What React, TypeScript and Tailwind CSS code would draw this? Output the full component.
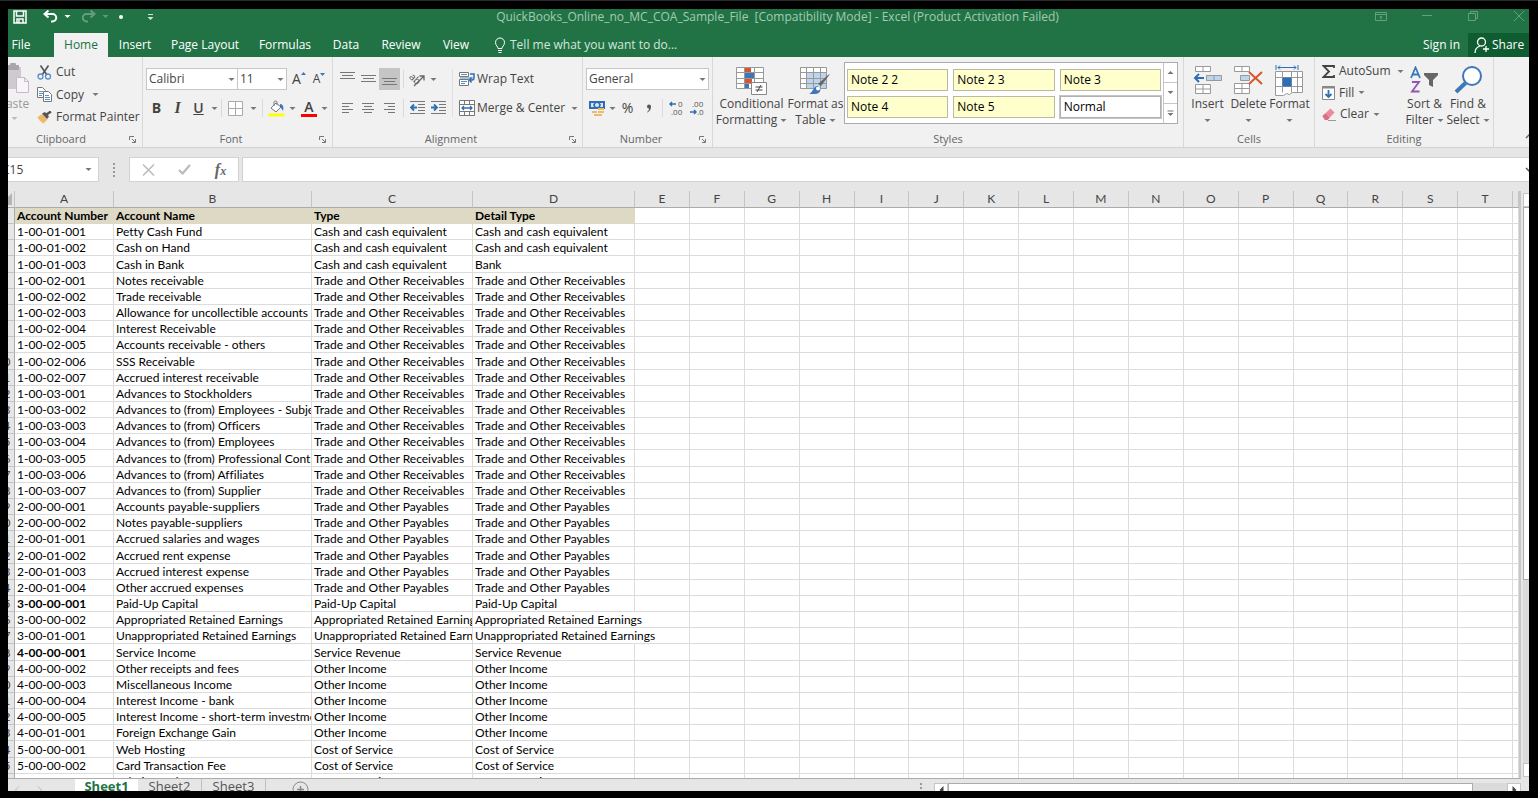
import type { ReactNode } from "react";

type Row = [string, string, string, string];

const RECEIVABLES = "Trade and Other Receivables";
const PAYABLES = "Trade and Other Payables";
const CASH = "Cash and cash equivalent";

const rows: Row[] = [
  ["1-00-01-001", "Petty Cash Fund", CASH, CASH],
  ["1-00-01-002", "Cash on Hand", CASH, CASH],
  ["1-00-01-003", "Cash in Bank", CASH, "Bank"],
  ["1-00-02-001", "Notes receivable", RECEIVABLES, RECEIVABLES],
  ["1-00-02-002", "Trade receivable", RECEIVABLES, RECEIVABLES],
  ["1-00-02-003", "Allowance for uncollectible accounts", RECEIVABLES, RECEIVABLES],
  ["1-00-02-004", "Interest Receivable", RECEIVABLES, RECEIVABLES],
  ["1-00-02-005", "Accounts receivable - others", RECEIVABLES, RECEIVABLES],
  ["1-00-02-006", "SSS Receivable", RECEIVABLES, RECEIVABLES],
  ["1-00-02-007", "Accrued interest receivable", RECEIVABLES, RECEIVABLES],
  ["1-00-03-001", "Advances to Stockholders", RECEIVABLES, RECEIVABLES],
  ["1-00-03-002", "Advances to (from) Employees - Subject", RECEIVABLES, RECEIVABLES],
  ["1-00-03-003", "Advances to (from) Officers", RECEIVABLES, RECEIVABLES],
  ["1-00-03-004", "Advances to (from) Employees", RECEIVABLES, RECEIVABLES],
  ["1-00-03-005", "Advances to (from) Professional Cont", RECEIVABLES, RECEIVABLES],
  ["1-00-03-006", "Advances to (from) Affiliates", RECEIVABLES, RECEIVABLES],
  ["1-00-03-007", "Advances to (from) Supplier", RECEIVABLES, RECEIVABLES],
  ["2-00-00-001", "Accounts payable-suppliers", PAYABLES, PAYABLES],
  ["2-00-00-002", "Notes payable-suppliers", PAYABLES, PAYABLES],
  ["2-00-01-001", "Accrued salaries and wages", PAYABLES, PAYABLES],
  ["2-00-01-002", "Accrued rent expense", PAYABLES, PAYABLES],
  ["2-00-01-003", "Accrued interest expense", PAYABLES, PAYABLES],
  ["2-00-01-004", "Other accrued expenses", PAYABLES, PAYABLES],
  ["3-00-00-001", "Paid-Up Capital", "Paid-Up Capital", "Paid-Up Capital"],
  ["3-00-00-002", "Appropriated Retained Earnings", "Appropriated Retained Earnings", "Appropriated Retained Earnings"],
  ["3-00-01-001", "Unappropriated Retained Earnings", "Unappropriated Retained Earnings", "Unappropriated Retained Earnings"],
  ["4-00-00-001", "Service Income", "Service Revenue", "Service Revenue"],
  ["4-00-00-002", "Other receipts and fees", "Other Income", "Other Income"],
  ["4-00-00-003", "Miscellaneous Income", "Other Income", "Other Income"],
  ["4-00-00-004", "Interest Income - bank", "Other Income", "Other Income"],
  ["4-00-00-005", "Interest Income - short-term investme", "Other Income", "Other Income"],
  ["4-00-01-001", "Foreign Exchange Gain", "Other Income", "Other Income"],
  ["5-00-00-001", "Web Hosting", "Cost of Service", "Cost of Service"],
  ["5-00-00-002", "Card Transaction Fee", "Cost of Service", "Cost of Service"],
  ["5-00-00-003", "Salaries and Wages-Ex-Tax", "Cost of Service", "Cost of Service"],
];

const boldAccounts = ["3-00-00-001", "4-00-00-001"];
const emptyColumns = "EFGHIJKLMNOPQRST".split("");

const tabs = [
  { label: "Insert", width: "w-[54px]" },
  { label: "Page Layout", width: "w-[86px]" },
  { label: "Formulas", width: "w-[74px]" },
  { label: "Data", width: "w-[48px]" },
  { label: "Review", width: "w-[62px]" },
  { label: "View", width: "w-[48px]" },
];

const cellStyles = ["Note 2 2", "Note 2 3", "Note 3", "Note 4", "Note 5", "Normal"];

export default function App() {
  return (
    <div className="flex h-screen overflow-hidden border-t border-[#2a2a2a] bg-black pt-2 pr-[9px] pb-[7px] pl-2 font-['Open_Sans',sans-serif] text-xs text-[#444]">
      <div className="flex min-w-0 flex-1 overflow-hidden">
        {/* the window runs past the frame on every side */}
        <div className="-mt-[9px] -mr-[13px] -mb-[5px] -ml-[15px] flex min-w-0 flex-1 flex-col bg-[#e6e6e6]">
          <TitleBar />
          <TabBar />
          <Ribbon />
          <FormulaBar />
          <div className="flex min-h-0 flex-1">
            <Sheet />
            <VerticalScroll />
          </div>
          <SheetTabs />
        </div>
      </div>
    </div>
  );
}

function TitleBar() {
  return (
    <header className="flex h-[33px] shrink-0 items-center bg-[#217346] text-white">
      <div className="flex flex-1 items-center pl-5">
        <button aria-label="Save">
          <svg width="14" height="14" viewBox="0 0 14 14" fill="none" stroke="white" strokeWidth="1.5">
            <path d="M1 1h12v12H1zM3.5 1v5h7V1M4 13V9h6v4M6 10v3" />
          </svg>
        </button>
        <button aria-label="Undo" className="ml-4">
          <svg width="15" height="14" viewBox="0 0 15 14" fill="none" stroke="white" strokeWidth="2">
            <path d="M5.5 0.5L1.5 4l4 3.500M2 4h7.500a3.500 3.500 0 0 1 0 7.500H8" />
          </svg>
        </button>
        <Caret className="ml-1.5 text-white" />
        <button aria-label="Redo" className="ml-2.5 opacity-30">
          <svg width="15" height="14" viewBox="0 0 15 14" fill="none" stroke="white" strokeWidth="2">
            <path d="M9.500 0.500l4 3.500-4 3.500M13 4H5.500a3.500 3.500 0 0 0 0 7.500H7" />
          </svg>
        </button>
        <Caret className="ml-1.5 text-[#5f9c7b]" />
        <span className="ml-2.5 size-1 rounded-full bg-white" />
        <button aria-label="Customize Quick Access Toolbar" className="ml-6">
          <svg width="7" height="8" viewBox="0 0 7 8" fill="#cfe3d7">
            <path d="M1 1h5v1H1zM0.500 4h6L3.500 7z" />
          </svg>
        </button>
      </div>
      <h1 className="whitespace-pre text-[#a3cbb3]">
        {"QuickBooks_Online_no_MC_COA_Sample_File  [Compatibility Mode] - Excel (Product Activation Failed)"}
      </h1>
      <div className="flex flex-1 justify-end">
        <WindowButton label="Ribbon Display Options">
          <path d="M0.500 1.500h11v8h-11zM0.500 3.500h11M6 8.500V5M4.500 6.500L6 5l1.500 1.500" />
        </WindowButton>
        <WindowButton label="Minimize">
          <path d="M1 4.500h10" />
        </WindowButton>
        <WindowButton label="Restore Down">
          <path d="M1.500 2.500h7v7h-7zM3.500 2.500v-2h7v7h-2" />
        </WindowButton>
        <WindowButton label="Close">
          <path d="M1 0l10 10M11 0L1 10" />
        </WindowButton>
      </div>
    </header>
  );
}

function WindowButton({ label, children }: { label: string; children: ReactNode }) {
  return (
    <button aria-label={label} className="flex w-[46px] justify-center">
      <svg width="12" height="12" viewBox="0 0 12 12" fill="none" stroke="#66a07e">
        {children}
      </svg>
    </button>
  );
}

function TabBar() {
  return (
    <nav className="flex h-6 shrink-0 items-stretch bg-[#217346] text-white">
      <button className="mr-[5px] w-[56px]">File</button>
      <button className="w-[54px] bg-[#f1f1f1] text-[#217346]">Home</button>
      {tabs.map((t) => (
        <button key={t.label} className={`${t.width} whitespace-nowrap`}>
          {t.label}
        </button>
      ))}
      <button className="ml-3.5 flex items-center gap-1 whitespace-nowrap text-[#d3e6db]">
        <svg width="12" height="16" viewBox="0 0 12 16" fill="none" stroke="white">
          <path d="M4 11.500c0-2-2.500-3-2.500-6a4.500 4.500 0 0 1 9 0c0 3-2.500 4-2.500 6zM4 13.500h4M4.500 15.500h3" />
        </svg>
        Tell me what you want to do...
      </button>
      <button className="ml-auto px-2 whitespace-nowrap">Sign in</button>
      <button className="flex w-[74px] items-center gap-0.5 bg-[#0e5c2f] pl-1.5">
        <svg width="16" height="17" viewBox="0 0 16 17" fill="none" stroke="white" strokeWidth="1.300">
          <circle cx="7.500" cy="5" r="4" />
          <path d="M1 16c0-4 2-6 5-7M12 9v6M9 12h6" />
        </svg>
        Share
      </button>
    </nav>
  );
}

function Caret({ className = "" }: { className?: string }) {
  return (
    <svg width="7" height="5" viewBox="0 0 7 5" className={`shrink-0 ${className}`} fill="currentColor" aria-hidden="true">
      <path d="M0.500 1h6L3.500 4z" />
    </svg>
  );
}

function Group({ label, launcher, className, children }: { label: string; launcher?: boolean; className: string; children: ReactNode }) {
  return (
    <section aria-label={label} className={`flex flex-col ${className}`}>
      <div className="flex h-[74px] border-r border-[#d8d8d8]">{children}</div>
      <div className="flex h-4 items-center border-r border-[#d8d8d8] text-[11px] text-[#666]">
        <span className="flex-1 text-center">{label}</span>
        {launcher && (
          <button aria-label={`${label} settings`} className="w-[13px]">
            <svg width="7" height="7" viewBox="0 0 7 7" fill="none" stroke="#777">
              <path d="M0.500 4V0.500H5M3 3l3 3M6.500 3v3.500H3" />
            </svg>
          </button>
        )}
      </div>
    </section>
  );
}

function IconButton({ label, width = "w-[21px]", active, children }: { label: string; width?: string; active?: boolean; children: ReactNode }) {
  return (
    <button aria-label={label} className={`flex h-[22px] shrink-0 items-center justify-center ${width} ${active ? "bg-[#c5c5c5]" : ""}`}>
      {children}
    </button>
  );
}

function Lines({ d }: { d: string }) {
  return (
    <svg width="15" height="14" viewBox="0 0 15 14" fill="none" stroke="#777">
      <path d={d} />
    </svg>
  );
}

function Divider() {
  return <span className="mx-[3px] h-[18px] w-px shrink-0 bg-[#dadada]" />;
}

function BigButton({ icon, lines, className }: { icon: ReactNode; lines: string[]; className: string }) {
  return (
    <button className={`flex shrink-0 flex-col items-center pt-[7px] leading-4 whitespace-nowrap ${className}`}>
      <span className="flex h-8 items-center">{icon}</span>
      <span>{lines[0]}</span>
      <span className="flex h-4 items-center gap-[3px]">
        {lines[1]}
        <Caret className="text-[#777]" />
      </span>
    </button>
  );
}

function Ribbon() {
  return (
    <div className="flex h-[91px] shrink-0 border-b border-[#d2d2d2] bg-[#f1f1f1]">
      <Group label="Clipboard" launcher className="w-[150px]">
        <button className="flex w-[42px] flex-col items-center pt-1.5 leading-4 text-[#999]">
          <svg width="26" height="33" viewBox="0 0 26 33" className="ml-1">
            <path d="M0 4h18v22H0z" fill="#cfcacf" />
            <path d="M3 2h4a3 3 0 0 1 6 0h3v5H3z" fill="#aaa5aa" />
            <path d="M13.500 14.500h8l4 4v11h-12z" fill="#f8f4fa" stroke="#c3bcc6" />
            <path d="M21.500 14.500v4h4" fill="none" stroke="#c3bcc6" />
          </svg>
          Paste
          <Caret className="mt-1 text-[#bbb]" />
        </button>
        <div className="flex flex-col pt-1 pl-0.5">
          <button className="flex h-[22px] items-center gap-1">
            <svg width="15" height="15" viewBox="0 0 15 15" fill="none">
              <path d="M3.500 0.500L10 10M11.500 0.500L5 10" stroke="#555" strokeWidth="1.600" />
              <circle cx="3.500" cy="11.500" r="2.500" stroke="#5b8fc7" strokeWidth="1.300" />
              <circle cx="11" cy="11.500" r="2.500" stroke="#5b8fc7" strokeWidth="1.300" />
            </svg>
            Cut
          </button>
          <button className="flex h-[23px] items-center gap-1">
            <svg width="15" height="15" viewBox="0 0 15 15" fill="white" stroke="#777">
              <path d="M0.500 0.500h5l3 3v7h-8z" />
              <path d="M2 4.500h4M2 6.500h4M2 8.500h3" stroke="#5b8fc7" />
              <path d="M6.500 4.500h5l3 3v7h-8z" />
              <path d="M8 8.500h4M8 10.500h5M8 12.500h5" stroke="#5b8fc7" />
            </svg>
            Copy
            <Caret className="ml-1 text-[#777]" />
          </button>
          <button className="flex h-[22px] items-center gap-1 whitespace-nowrap">
            <svg width="15" height="13" viewBox="0 0 15 13">
              <path d="M0.500 6l5-3 5 5.500-4 4C4 11 1.500 9 0.500 6z" fill="#edb96b" />
              <path d="M5 2.500l3-1.500 4 4.500-2 2.500z" fill="#555" />
              <path d="M9.500 3.500L14 0.500" stroke="#555" strokeWidth="2.500" />
            </svg>
            Format Painter
          </button>
        </div>
      </Group>

      <Group label="Font" launcher className="w-[190px]">
        <div className="flex flex-1 flex-col gap-[7px] pt-[11px] pl-[3px]">
          <div className="flex items-center">
            <FakeSelect label="Font name" value="Calibri" width="w-[92px]" />
            <FakeSelect label="Font size" value="11" width="w-[50px] -ml-px" />
            <IconButton label="Increase font size" width="ml-0.5 w-[20px]">
              <span className="text-sm">A</span>
              <svg width="5" height="14" viewBox="0 0 5 14" fill="#3c78b8"><path d="M0 3l2.500-3L5 3z" /></svg>
            </IconButton>
            <IconButton label="Decrease font size" width="w-[20px]">
              <span className="text-xs">A</span>
              <svg width="5" height="14" viewBox="0 0 5 14" fill="#3c78b8"><path d="M0 1h5L2.500 4z" /></svg>
            </IconButton>
          </div>
          <div className="flex items-center">
            <IconButton label="Bold"><b className="text-sm">B</b></IconButton>
            <IconButton label="Italic"><i className="font-['Liberation_Serif',serif] text-base font-bold">I</i></IconButton>
            <IconButton label="Underline"><u className="text-sm font-semibold">U</u></IconButton>
            <Caret className="ml-0.5 text-[#777]" />
            <Divider />
            <IconButton label="Borders">
              <svg width="15" height="15" viewBox="0 0 15 15" fill="white" stroke="#aaa"><path d="M0.500 0.500h14v14h-14zM7.500 0.500v14M0.500 7.500h14" /></svg>
            </IconButton>
            <Caret className="mr-0.5 ml-1 text-[#777]" />
            <Divider />
            <IconButton label="Fill color">
              <svg width="17" height="17" viewBox="0 0 17 17">
                <path d="M3 8l5-5 5 4-5 5z" fill="white" stroke="#777" />
                <path d="M6 6V2.500a1.500 1.500 0 0 1 3 0V5" fill="none" stroke="#777" />
                <path d="M12 4c3 0 4 3 3 7-1-2-2-3-3-4z" fill="#3c78b8" />
                <path d="M0.500 13.500h16v3h-16z" fill="#ffff00" />
              </svg>
            </IconButton>
            <Caret className="ml-0.5 text-[#777]" />
            <IconButton label="Font color" width="ml-0.5 w-[22px]">
              <span className="border-b-[3px] border-[#f00] px-[3px] text-sm leading-[14px] font-semibold">A</span>
            </IconButton>
            <Caret className="ml-px text-[#777]" />
          </div>
        </div>
      </Group>

      <Group label="Alignment" launcher className="w-[250px]">
        <div className="flex flex-col gap-[7px] pt-[11px] pl-1">
          <div className="flex">
            <IconButton label="Top align"><Lines d="M0 0.500h15M2 3.500h11M0 6.500h15" /></IconButton>
            <IconButton label="Middle align"><Lines d="M0 3.500h15M2 6.500h11M0 9.500h15" /></IconButton>
            <IconButton label="Bottom align" active><Lines d="M0 6.500h15M2 9.500h11M0 12.500h15" /></IconButton>
          </div>
          <div className="flex">
            <IconButton label="Align left"><Lines d="M2 2.500h11M2 5.500h7M2 8.500h11M2 11.500h7" /></IconButton>
            <IconButton label="Center"><Lines d="M1 2.500h12M3 5.500h8M1 8.500h12M3 11.500h8" /></IconButton>
            <IconButton label="Align right"><Lines d="M2 2.500h11M6 5.500h7M2 8.500h11M6 11.500h7" /></IconButton>
          </div>
        </div>
        <div className="flex flex-col gap-[7px] pt-[11px]">
          <div className="flex items-center">
            <Divider />
            <IconButton label="Orientation">
              <svg width="17" height="15" viewBox="0 0 17 15" fill="none" stroke="#666">
                <path d="M5 14L14.500 4.500M15 8.500V4h-4.500" strokeWidth="1.300" />
                <text x="0" y="8" fontSize="10" fill="#555" stroke="none" transform="rotate(42 3 6)">ab</text>
              </svg>
            </IconButton>
            <Caret className="ml-0.5 text-[#777]" />
          </div>
          <div className="flex items-center">
            <Divider />
            <IconButton label="Decrease indent">
              <svg width="15" height="14" viewBox="0 0 15 14" fill="none" stroke="#777">
                <path d="M0 0.500h15M8 3.500h7M8 6.500h7M8 9.500h7M0 12.500h15" />
                <path d="M7 6.500H1M4 3.500l-3 3 3 3" stroke="#2f6eb5" strokeWidth="1.800" />
              </svg>
            </IconButton>
            <IconButton label="Increase indent">
              <svg width="15" height="14" viewBox="0 0 15 14" fill="none" stroke="#777">
                <path d="M0 0.500h15M8 3.500h7M8 6.500h7M8 9.500h7M0 12.500h15" />
                <path d="M0 6.500h6M3 3.500l3 3-3 3" stroke="#2f6eb5" strokeWidth="1.800" />
              </svg>
            </IconButton>
          </div>
        </div>
        <span className="mt-3 ml-[3px] h-12 w-px bg-[#e0e0e0]" />
        <div className="flex flex-col gap-[7px] pt-[11px] pl-1.5">
          <button className="flex h-[22px] items-center gap-0.5 whitespace-nowrap">
            <svg width="16" height="16" viewBox="0 0 16 16" fill="none">
              <path d="M0.500 1.500h9v4h-9zM0.500 8.500h9v6h-9z" fill="white" stroke="#777" />
              <path d="M2 3.500h6M2 10.500h6M2 12.500h4M1 7h13" stroke="#5b8fc7" />
              <path d="M11 3h4v4c0 2-1 2-4 2M12.500 6.500L10.500 9l2 2.500" stroke="#2f6eb5" strokeWidth="1.500" />
            </svg>
            Wrap Text
          </button>
          <button className="flex h-[22px] items-center gap-0.5 whitespace-nowrap">
            <svg width="16" height="16" viewBox="0 0 16 16" fill="none">
              <path d="M0.500 0.500h15v15h-15zM0.500 4.500h15M0.500 11.500h15M5.500 0.500v4M10.500 0.500v4M5.500 11.500v4M10.500 11.500v4" fill="white" stroke="#777" />
              <path d="M3 8h10M5 6L3 8l2 2M11 6l2 2-2 2" stroke="#2f6eb5" strokeWidth="1.300" />
            </svg>
            Merge &amp; Center
            <Caret className="ml-1 text-[#777]" />
          </button>
        </div>
      </Group>

      <Group label="Number" launcher className="w-[130px]">
        <div className="flex flex-1 flex-col gap-[7px] px-[3px] pt-[11px]">
          <FakeSelect label="Number format" value="General" width="w-full" />
          <div className="flex items-center">
            <IconButton label="Accounting format">
              <svg width="16" height="16" viewBox="0 0 16 16">
                <path d="M0 1h16v8H0z" fill="#2f6eb5" />
                <path d="M2 3h3L4 5l1 2H2zM11 3h3v4h-3l1-2z" fill="#dbe7f3" />
                <circle cx="8" cy="5" r="2" fill="#dbe7f3" />
                <path d="M9 8h6v2H9zM9 11h6v2H9zM3 11h5v2H3zM5 14h8v2H5z" fill="#edb96b" />
              </svg>
            </IconButton>
            <Caret className="mr-px ml-0.5 text-[#777]" />
            <IconButton label="Percent"><span className="text-sm">%</span></IconButton>
            <IconButton label="Comma">
              <svg width="6" height="9" viewBox="0 0 6 9" fill="#555"><path d="M1 2.500a2 2 0 1 1 4 0C5 5 4 7 1.500 8.500L1 8c1.500-1 2-2 2-3.500a2 2 0 0 1-2-2z" /></svg>
            </IconButton>
            <Divider />
            <IconButton label="Increase decimal">
              <Decimals top="0" bottom=".00" topX={9} bottomX={2} arrow="M7 4H1M3 2L1 4l2 2" />
            </IconButton>
            <IconButton label="Decrease decimal">
              <Decimals top=".00" bottom=".0" topX={2} bottomX={7} arrow="M0 12h6M4 10l2 2-2 2" />
            </IconButton>
          </div>
        </div>
      </Group>

      <Group label="Styles" className="min-w-0 flex-1">
        <BigButton
          className="ml-[3px] w-[71px]"
          lines={["Conditional", "Formatting"]}
          icon={
            <svg width="31" height="29" viewBox="0 0 31 29">
              <path d="M0.500 1.500h27v21h-27z" fill="white" />
              <path d="M9 1h6v6H9z" fill="#d9552b" />
              <path d="M9 7h9v5H9z" fill="#3c78b8" />
              <path d="M9 12h7v5H9z" fill="#d9552b" />
              <path d="M9 17h4v6H9z" fill="#3c78b8" />
              <path d="M0.500 1.500h27v21h-27zM0.500 6.500h27M0.500 12.500h27M0.500 17.500h27M8.500 1.500v21M18.500 1.500v21" fill="none" stroke="#999" />
              <path d="M15.500 16.500h15v12h-15z" fill="white" stroke="#888" />
              <path d="M19.500 21h7M19.500 24h7M25 19l-4 7" stroke="#444" fill="none" />
            </svg>
          }
        />
        <BigButton
          className="w-[57px]"
          lines={["Format as", "Table"]}
          icon={
            <svg width="31" height="29" viewBox="0 0 31 29" fill="none">
              <path d="M0.500 1.500h26v21h-26z" fill="white" />
              <path d="M7 7h20v16H7z" fill="#bcd4ec" />
              <path d="M0.500 1.500h26v21h-26zM0.500 6.500h26M0.500 12.500h26M0.500 17.500h26M6.500 1.500v21M13.500 1.500v21M20.500 1.500v21" stroke="#999" />
              <path d="M30 8l-9 12-3-2L28 9z" fill="#666" />
              <path d="M9 28c4-1 4-8 9-8 4 2 3 8-3 8z" fill="#3c78b8" />
              <circle cx="18" cy="22.500" r="2" fill="white" />
            </svg>
          }
        />
        <div className="mt-[5px] mr-[5px] flex h-[62px] min-w-0 flex-1 border border-[#ababab] bg-white">
          <div className="grid flex-1 grid-cols-3 content-center gap-x-[5px] gap-y-[5px] px-0.5 text-black">
            {cellStyles.map((s) => (
              <button
                key={s}
                className={`h-[22px] truncate border pl-[3px] text-left ${s === "Normal" ? "border-[#b0b0b0] bg-white outline-1 outline-[#c5c5c5]" : "border-[#b9b9a5] bg-[#ffffcc]"}`}
              >
                {s}
              </button>
            ))}
          </div>
          <div className="flex w-[14px] flex-col divide-y divide-[#c6c6c6] border-l border-[#c6c6c6]">
            <button aria-label="Scroll styles up" className="flex flex-1 items-center justify-center">
              <Caret className="rotate-180 text-[#777]" />
            </button>
            <button aria-label="Scroll styles down" className="flex flex-1 items-center justify-center">
              <Caret className="text-[#777]" />
            </button>
            <button aria-label="More styles" className="flex flex-1 items-center justify-center">
              <svg width="7" height="7" viewBox="0 0 7 7" fill="#777"><path d="M0.500 0.500h6v1h-6zM0.500 3h6L3.500 6z" /></svg>
            </button>
          </div>
        </div>
      </Group>

      <Group label="Cells" className="w-[131px]">
        <BigButton
          className="ml-[3px] w-[41px]"
          lines={["Insert"]}
          icon={
            <svg width="29" height="29" viewBox="0 0 29 29" fill="white" stroke="#999">
              <path d="M2.500 0.500h15v5h-15zM10 0.500v5M2.500 18.500h15v9h-15zM2.500 23h15M10 18.500v9" />
              <path d="M13.500 9.500h15v5h-15zM21 9.500v5" fill="#bcd4ec" />
              <path d="M11 12H2M6 8l-4 4 4 4" stroke="#2f6eb5" strokeWidth="2" fill="none" />
            </svg>
          }
        />
        <BigButton
          className="w-[41px]"
          lines={["Delete"]}
          icon={
            <svg width="29" height="29" viewBox="0 0 29 29" fill="white" stroke="#999">
              <path d="M0.500 0.500h15v5h-15zM8 0.500v5M0.500 17.500h15v10h-15zM0.500 22.500h15M8 17.500v10" />
              <path d="M6.500 9.500h9v5h-9z" fill="#bcd4ec" />
              <path d="M15 6l13 12M28 6L15 18" stroke="#d9552b" strokeWidth="2" fill="none" />
            </svg>
          }
        />
        <BigButton
          className="w-[41px]"
          lines={["Format"]}
          icon={
            <svg width="29" height="31" viewBox="0 0 29 31" fill="white" stroke="#999">
              <path d="M0.500 6.500h27v21h-10l-3 2-3-1-3 2H0.500z" />
              <path d="M0.500 12.500h27M0.500 21.500h27M7.500 6.500v21M16.500 6.500v21M22.500 6.500v21" />
              <path d="M8 13h8v8H8z" fill="#2f6eb5" stroke="#2f6eb5" />
              <path d="M1 0v5M23 0v5M3 2.500h18M5 0.500l-2 2 2 2M19 0.500l2 2-2 2" stroke="#2f6eb5" fill="none" />
            </svg>
          }
        />
      </Group>

      <Group label="Editing" className="w-[179px]">
        <div className="flex w-[88px] shrink-0 flex-col pt-[3px] pl-[7px] whitespace-nowrap">
          <button className="flex h-[22px] items-center gap-1">
            <svg width="13" height="13" viewBox="0 0 13 13" fill="none" stroke="#444" strokeWidth="1.800" className="shrink-0">
              <path d="M12 3V1H1.500L7 6.500 1.500 12H12v-2" />
            </svg>
            AutoSum
            <Caret className="ml-0.5 text-[#777]" />
          </button>
          <button className="flex h-[21px] items-center gap-1">
            <svg width="13" height="14" viewBox="0 0 13 14" fill="none">
              <path d="M0.500 0.500h12v13h-12z" fill="white" stroke="#888" />
              <path d="M0 1.500h13" stroke="#888" strokeWidth="2" />
              <path d="M6.500 4v7M3.500 8l3 3 3-3" stroke="#2f6eb5" strokeWidth="1.800" />
            </svg>
            Fill
            <Caret className="text-[#777]" />
          </button>
          <button className="flex h-[22px] items-center gap-1">
            <svg width="14" height="13" viewBox="0 0 14 13">
              <path d="M0.500 8l8-7.500 4 4-7 7.500H3z" fill="#ea8a9c" />
              <path d="M0.500 8l3-2.500 4 4.500-2 2H3z" fill="#d96f84" />
              <path d="M6 12.500h8" stroke="#999" />
            </svg>
            Clear
            <Caret className="text-[#777]" />
          </button>
        </div>
        <BigButton
          className="w-[43px]"
          lines={["Sort &", "Filter"]}
          icon={
            <svg width="29" height="28" viewBox="0 0 29 28" fill="none">
              <path d="M1 12L5.500 1.500 10 12M2.500 8.500h6" stroke="#3c78b8" strokeWidth="1.800" />
              <path d="M2 16h7L2 25.500h7.500" stroke="#9455b5" strokeWidth="1.800" />
              <path d="M14 7h14v2l-5 5v7l-4-2v-5l-5-5z" fill="#666" />
            </svg>
          }
        />
        <BigButton
          className="w-[44px]"
          lines={["Find &", "Select"]}
          icon={
            <svg width="29" height="28" viewBox="0 0 29 28" fill="none" stroke="#3c78b8">
              <circle cx="18" cy="10" r="9" fill="white" strokeWidth="2" />
              <path d="M11.500 17L2 26" strokeWidth="4" />
            </svg>
          }
        />
      </Group>
      <div className="flex w-12 items-end justify-center">
        <button aria-label="Collapse ribbon" className="mb-2 pl-6">
          <svg width="10" height="6" viewBox="0 0 10 6" fill="none" stroke="#666" strokeWidth="1.500"><path d="M1 5l4-4 4 4" /></svg>
        </button>
      </div>
    </div>
  );
}

function FakeSelect({ label, value, width }: { label: string; value: string; width: string }) {
  return (
    <div className={`flex h-[22px] items-center border border-[#c6c6c6] bg-white pr-0.5 ${width}`}>
      <select aria-label={label} defaultValue={value} className="h-5 w-full min-w-0 appearance-none pl-0.5 leading-5 outline-none">
        <option>{value}</option>
      </select>
      <Caret className="text-[#777]" />
    </div>
  );
}

function Decimals({ top, bottom, topX, bottomX, arrow }: { top: string; bottom: string; topX: number; bottomX: number; arrow: string }) {
  return (
    <svg width="15" height="16" viewBox="0 0 15 16" fontSize="8" fill="#555">
      <text x={topX} y="7">{top}</text>
      <text x={bottomX} y="15">{bottom}</text>
      <path d={arrow} fill="none" stroke="#2f6eb5" strokeWidth="1.500" />
    </svg>
  );
}

function FormulaBar() {
  return (
    <div className="flex h-[43px] shrink-0 items-start pt-[9px]">
      <div className="flex h-[25px] w-[106px] items-center border border-[#d2d2d2] bg-white pr-1.5">
        <input aria-label="Name box" defaultValue="C15" className="min-w-0 flex-1 pl-2 outline-none" />
        <Caret className="text-[#777]" />
      </div>
      <div className="flex h-[25px] w-[30px] items-center justify-center">
        <svg width="2" height="14" viewBox="0 0 2 14" fill="#999"><path d="M0 0h2v2H0zM0 4h2v2H0zM0 8h2v2H0zM0 12h2v2H0z" /></svg>
      </div>
      <div className="flex h-[25px] w-[110px] items-center justify-around border border-[#d2d2d2] bg-white">
        <button aria-label="Cancel">
          <svg width="13" height="12" viewBox="0 0 13 12" fill="none" stroke="#bbb" strokeWidth="1.500"><path d="M1 0.500l11 11M12 0.500l-11 11" /></svg>
        </button>
        <button aria-label="Enter">
          <svg width="13" height="11" viewBox="0 0 13 11" fill="none" stroke="#bbb" strokeWidth="2.200"><path d="M1 6l3.500 3.500L12 1" /></svg>
        </button>
        <button aria-label="Insert function" className="font-['Liberation_Serif',serif] text-base leading-5 font-bold text-[#666] italic">
          f<span className="text-xs">x</span>
        </button>
      </div>
      <div className="ml-[3px] flex h-[25px] min-w-0 flex-1 items-center border border-[#d2d2d2] bg-white pr-1.5">
        <input aria-label="Formula bar" className="min-w-0 flex-1 px-1 outline-none" />
        <svg width="10" height="6" viewBox="0 0 10 6" fill="none" stroke="#555" strokeWidth="1.500"><path d="M1 1l4 4 4-4" /></svg>
      </div>
    </div>
  );
}

function Sheet() {
  const head = "h-[17px] border-r border-b border-r-[#c4c4c4] border-b-[#ababab] bg-[#e6e6e6] p-0 text-center font-normal leading-4";
  const cell = "border-r border-b border-[#dcdcdc] p-0 pl-0.5 whitespace-nowrap";
  const rowHead = "border-r border-b border-r-[#ababab] border-b-[#c4c4c4] bg-[#e6e6e6] p-0 text-center font-normal text-[#444]";
  const titleCell = "border-b border-[#ddd9c4] bg-[#ddd9c4] p-0 pl-0.5 text-left font-bold whitespace-nowrap";

  return (
    <div className="min-w-0 flex-1 overflow-hidden border-r-2 border-b border-r-[#c6c6c6] border-b-[#ababab] bg-white">
      <table className="w-full table-fixed border-separate border-spacing-0 font-['Lato',sans-serif] text-xs leading-[15px] text-black [font-variant-ligatures:none]">
        <colgroup>
          <col className="w-[22px]" />
          <col className="w-[99px]" />
          <col className="w-[198px]" />
          <col className="w-[161px]" />
          <col className="w-[162px]" />
          {emptyColumns.map((c) => (
            <col key={c} />
          ))}
          <col className="w-[6px]" />
        </colgroup>
        <thead>
          <tr className="text-[#444]">
            <th className={head} aria-label="Select all">
              <svg width="12" height="12" viewBox="0 0 12 12" className="mr-0.5 ml-auto" fill="#b5b5b5"><path d="M12 0v12H0z" /></svg>
            </th>
            {["A", "B", "C", "D", ...emptyColumns].map((c) => (
              <th key={c} className={head}>{c}</th>
            ))}
            <th className={head} />
          </tr>
        </thead>
        <tbody>
          <tr className="h-4">
            <th className={rowHead}>1</th>
            <th className={titleCell}>Account Number</th>
            <th className={titleCell}>Account Name</th>
            <th className={titleCell}>Type</th>
            <th className={titleCell}>Detail Type</th>
            {emptyColumns.map((c) => (
              <td key={c} className={cell} />
            ))}
            <td className={cell} />
          </tr>
          {rows.map((r, i) => {
            const spills = r[3].endsWith("Retained Earnings");
            return (
              <tr key={r[0]} className={i % 6 === 2 ? "h-[17px]" : "h-4"}>
                <th className={rowHead}>{i + 2}</th>
                <td className={`${cell} ${boldAccounts.includes(r[0]) ? "font-bold" : ""}`}>{r[0]}</td>
                <td className={`${cell} overflow-hidden`}>{r[1]}</td>
                <td className={`${cell} overflow-hidden`}>{r[2]}</td>
                <td className={`${cell} ${spills ? "border-r-transparent" : ""}`}>{r[3]}</td>
                {emptyColumns.map((c) => (
                  <td key={c} className={cell} />
                ))}
                <td className={cell} />
              </tr>
            );
          })}
        </tbody>
      </table>
    </div>
  );
}

function VerticalScroll() {
  return (
    <div className="flex w-[21px] flex-col bg-[#e6e6e6] pt-0.5 pb-0.5 pl-0.5">
      <button aria-label="Scroll up" className="flex h-[14px] items-center border border-[#c6c6c6] bg-white pl-1">
        <Caret className="rotate-180" />
      </button>
      <div className="flex min-h-0 flex-1 flex-col bg-[#dadada]">
        <div className="h-[67%] border border-[#ababab] bg-white" />
      </div>
      <button aria-label="Scroll down" className="flex h-[14px] items-center border border-[#c6c6c6] bg-white pl-1">
        <Caret />
      </button>
    </div>
  );
}

function SheetTabs() {
  return (
    <div className="flex h-[17px] shrink-0 items-start text-[13px] leading-[15px] text-[#555]">
      <div className="flex w-[82px] items-center gap-[17px] pt-[7px] pl-[22px]">
        <button aria-label="Previous sheet">
          <svg width="5" height="8" viewBox="0 0 5 8" fill="none" stroke="#bbb"><path d="M4 0.500L0.500 4 4 7.500" /></svg>
        </button>
        <button aria-label="Next sheet">
          <svg width="5" height="8" viewBox="0 0 5 8" fill="none" stroke="#bbb"><path d="M1 0.500L4.500 4 1 7.500" /></svg>
        </button>
      </div>
      <button className="w-[63px] bg-white font-bold text-[#217346]">Sheet1</button>
      <button className="w-[64px] border-r border-[#c0c0c0]">Sheet2</button>
      <button className="w-[64px] border-r border-[#c0c0c0]">Sheet3</button>
      <button aria-label="New sheet" className="ml-[26px] pt-0.5">
        <svg width="17" height="17" viewBox="0 0 17 17" fill="none" stroke="#888"><circle cx="8.500" cy="8.500" r="7.500" /><path d="M8.500 5v7M5 8.500h7" strokeWidth="1.500" /></svg>
      </button>
      <div className="ml-auto flex w-[622px] items-stretch self-stretch pt-1">
        <svg width="2" height="12" viewBox="0 0 2 12" fill="#999"><path d="M0 0h2v2H0zM0 4h2v2H0zM0 8h2v2H0z" /></svg>
        <button aria-label="Scroll left" className="ml-3 w-[14px] border border-[#c6c6c6] bg-white pl-1">
          <svg width="5" height="8" viewBox="0 0 5 8" fill="#444"><path d="M4.500 0v8L0.500 4z" /></svg>
        </button>
        <div className="flex flex-1 bg-[#dadada]">
          <div className="w-[94%] border border-[#ababab] bg-white" />
        </div>
        <button aria-label="Scroll right" className="mr-[21px] w-[14px] border border-[#c6c6c6] bg-white pl-1">
          <svg width="5" height="8" viewBox="0 0 5 8" fill="#444"><path d="M0.500 0v8l4-4z" /></svg>
        </button>
      </div>
    </div>
  );
}
